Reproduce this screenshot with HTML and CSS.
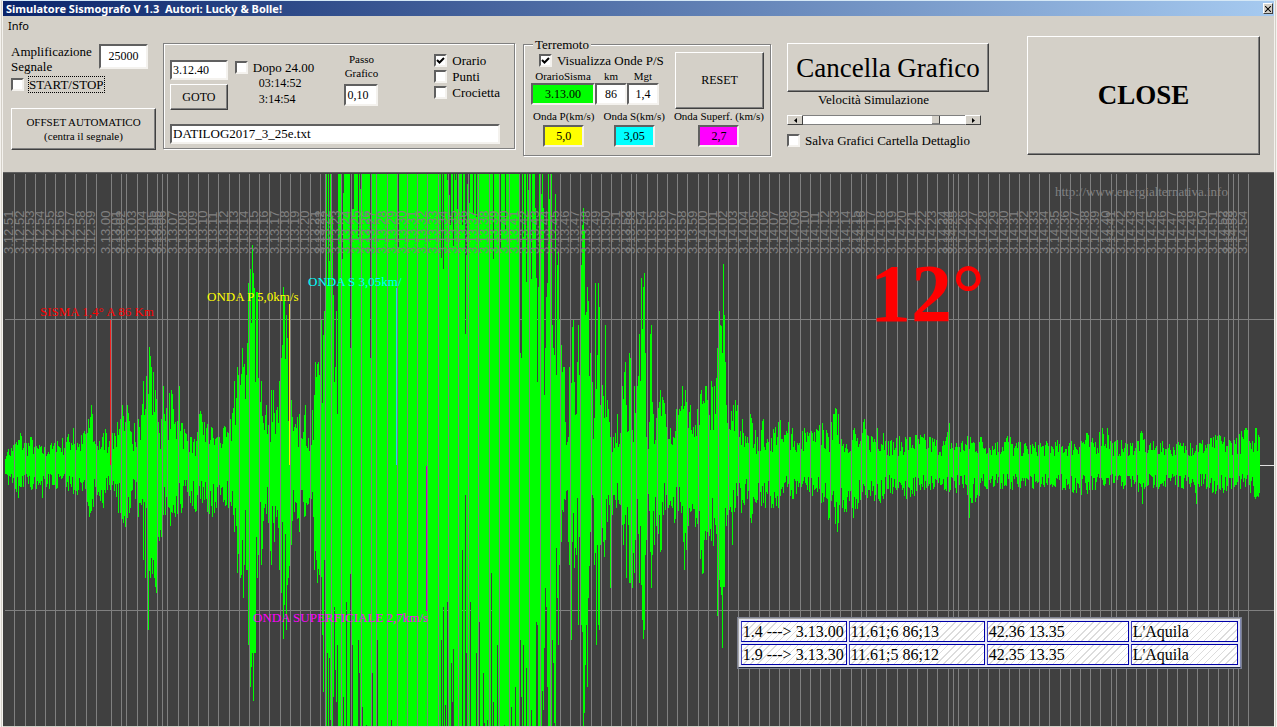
FILE: index.html
```html
<!DOCTYPE html>
<html lang="it">
<head>
<meta charset="utf-8">
<title>Simulatore Sismografo V 1.3</title>
<link rel="stylesheet" href="styles.css">
</head>
<body>
<div class="window">
  <header class="titlebar">
    <h1 class="title">Simulatore Sismografo V 1.3&nbsp; Autori: Lucky &amp; Bolle!</h1>
    <button class="title-close" type="button" aria-label="Chiudi finestra">
      <svg width="6" height="6" viewBox="0 0 7 7"><path d="M0 0L7 7M7 0L0 7" stroke="#000" stroke-width="1.2"/></svg>
    </button>
  </header>
  <nav class="menubar"><button class="menu-item" type="button">Info</button></nav>

  <main class="toolbar">
    <section class="signal">
      <div class="amp-row">
        <label class="label" for="amp">Amplificazione<br>Segnale</label>
        <input class="field field-amp" id="amp" value="25000">
      </div>
      <label class="check check-start"><input type="checkbox"><span class="focus">START/STOP</span></label>
      <button class="btn btn-offset" type="button">OFFSET AUTOMATICO<br>(centra il segnale)</button>
    </section>

    <section class="group group-file">
      <div class="file-top">
        <div class="goto-col">
          <input class="field" aria-label="Orario di partenza" value="3.12.40">
          <button class="btn btn-goto" type="button">GOTO</button>
        </div>
        <div class="after-col">
          <label class="check"><input type="checkbox"><span>Dopo 24.00</span></label>
          <span class="clock">03:14:52</span>
          <span class="clock">3:14:54</span>
        </div>
        <div class="step-col">
          <label class="small" for="step">Passo<br>Grafico</label>
          <input class="field field-step" id="step" value="0,10">
        </div>
        <div class="options">
          <label class="check"><input type="checkbox" checked><span>Orario</span></label>
          <label class="check"><input type="checkbox"><span>Punti</span></label>
          <label class="check"><input type="checkbox"><span>Crocietta</span></label>
        </div>
      </div>
      <input class="field field-file" aria-label="File dati" value="DATILOG2017_3_25e.txt">
    </section>

    <fieldset class="group group-quake">
      <legend>Terremoto</legend>
      <div class="quake-top">
        <div class="quake-left">
          <label class="check check-waves"><input type="checkbox" checked><span>Visualizza Onde P/S</span></label>
          <div class="event">
            <label class="small" for="time">OrarioSisma</label>
            <label class="small" for="dist">km</label>
            <label class="small" for="mag">Mgt</label>
            <input class="field center green" id="time" value="3.13.00">
            <input class="field center" id="dist" value="86">
            <input class="field center" id="mag" value="1,4">
          </div>
        </div>
        <button class="btn btn-reset" type="button">RESET</button>
      </div>
      <div class="speeds">
        <div class="speed"><label class="small" for="vp">Onda P(km/s)</label><input class="field center yellow" id="vp" value="5,0"></div>
        <div class="speed"><label class="small" for="vs">Onda S(km/s)</label><input class="field center cyan" id="vs" value="3,05"></div>
        <div class="speed"><label class="small" for="vl">Onda Superf. (km/s)</label><input class="field center magenta" id="vl" value="2,7"></div>
      </div>
    </fieldset>

    <section class="graphics">
      <button class="btn btn-clear" type="button">Cancella Grafico</button>
      <label class="label speed-label" for="speed">Velocità Simulazione</label>
      <div class="scroll">
        <button class="arrow" type="button" aria-label="Rallenta"><svg width="3" height="5" viewBox="0 0 3 5"><path d="M3 0V5L0 2.5Z"/></svg></button>
        <input class="range" id="speed" type="range" min="0" max="100" value="84">
        <button class="arrow" type="button" aria-label="Accelera"><svg width="3" height="5" viewBox="0 0 3 5"><path d="M0 0V5L3 2.5Z"/></svg></button>
      </div>
      <label class="check"><input type="checkbox"><span>Salva Grafici Cartella Dettaglio</span></label>
    </section>

    <button class="btn btn-close" type="button">CLOSE</button>
  </main>

  <section class="chart">
    <svg class="plot" id="plot" viewBox="3 173 1271 553" role="img" aria-label="Sismogramma">
      <path class="grid" d="M5 319.5H1274M5 610.5H1274"/>
      <path class="zero" d="M5 465.5H1274"/>
      <path class="trace" id="trace"/>
      <path class="grid" id="seconds"/>
      <g class="times" id="times"></g>
      <path class="mark red-line" d="M110.5 320V465"/>
      <path class="mark yellow-line" d="M289.5 304V465"/>
      <path class="mark cyan-line" d="M396.5 288V465"/>
      <path class="mark magenta-line" d="M426.5 466V611"/>
      <text class="note red" x="40" y="316">SISMA 1,4° A 86 Km</text>
      <text class="note yellow-text" x="207" y="301">ONDA P 5,0km/s</text>
      <text class="note cyan-text" x="308" y="286">ONDA S 3,05km/</text>
      <text class="note magenta-text" x="253" y="622">ONDA SUPERFICIALE 2,7km/s</text>
      <text class="note site" x="1055" y="196">http://www.energialternativa.info</text>
      <text class="degree" x="870" y="321">12°</text>
    </svg>
    <table class="events">
      <tr><td>1.4 ---&gt; 3.13.00</td><td>11.61;6 86;13</td><td>42.36 13.35</td><td>L'Aquila</td></tr>
      <tr><td>1.9 ---&gt; 3.13.30</td><td>11.61;5 86;12</td><td>42.35 13.35</td><td>L'Aquila</td></tr>
    </table>
  </section>
</div>
<script src="chart.js"></script>
</body>
</html>
```
FILE: styles.css
```css
* { box-sizing: border-box; }

body {
  margin: 0;
  background: #d4d0c8;
  color: #000;
  font: 13px/15px "Liberation Serif", "Times New Roman", serif;
}

button, input { font: inherit; color: inherit; margin: 0; }

.window {
  border-top: 1px solid #d5e8f6;
  border-left: 3px double #f4f2ee;
  border-right: 3px double #f4f2ee;
}

/* title and menu */
.titlebar {
  display: flex;
  align-items: center;
  justify-content: space-between;
  height: 15px;
  padding: 0 1px 0 3px;
  background: linear-gradient(90deg, #0a246a, #a6caf0);
}
.title {
  margin: 0;
  color: #fff;
  font: bold 11px/15px "Noto Sans", "Open Sans", sans-serif;
  white-space: nowrap;
}
.title-close {
  display: grid;
  place-items: center;
  width: 10px;
  height: 11px;
  padding: 0;
  background: #d4d0c8;
  border: 1px solid;
  border-color: #fff #404040 #404040 #fff;
}
.menubar { height: 20px; padding: 2px 5px; }
.menu-item {
  padding: 0;
  border: 0;
  background: none;
  font: 11px/15px "Noto Sans", "Open Sans", sans-serif;
}

/* shared controls */
.btn {
  padding: 0;
  background: #d4d0c8;
  border: 1px solid;
  border-color: #fff #404040 #404040 #fff;
  box-shadow: inset -1px -1px 0 #808080;
  text-align: center;
}
.field {
  min-width: 0;
  height: 20px;
  padding: 0 1px;
  background: #fff;
  border: 2px solid;
  border-color: #606060 #f4f2ee #f4f2ee #606060;
  border-radius: 0;
  font-size: 12px;
}
.center { text-align: center; }
.green { background: #0f0; }
.yellow { background: #ff0; }
.cyan { background: #0ff; }
.magenta { background: #f0f; }
.small { font-size: 11px; line-height: 14px; text-align: center; white-space: nowrap; }
.check { display: flex; align-items: center; gap: 5px; height: 16px; white-space: nowrap; }
.check input {
  appearance: none;
  flex: none;
  width: 13px;
  height: 13px;
  background: #fff;
  border: 2px solid;
  border-color: #606060 #f4f2ee #f4f2ee #606060;
}
.check input:checked {
  background: #fff url("data:image/svg+xml,%3Csvg xmlns='http://www.w3.org/2000/svg' viewBox='0 0 9 9'%3E%3Cpath d='M1 4L3.5 6.5L8 2' fill='none' stroke='%23000' stroke-width='2'/%3E%3C/svg%3E") center / 9px 9px no-repeat;
}
.group {
  margin: 0;
  border: 1px solid #808080;
  box-shadow: 1px 1px 0 #fff, inset 1px 1px 0 #fff;
}

/* toolbar */
.toolbar {
  display: flex;
  align-items: flex-start;
  min-height: 136px;
  padding: 0 14px 0 8px;
}
.signal { flex: none; width: 145px; padding-top: 8px; }
.amp-row { display: flex; justify-content: space-between; padding-right: 8px; }
.amp-row .field { width: 49px; height: 25px; text-align: center; }
.check-start { margin: 7px 0 16px; height: 16px; }
.check-start .focus { outline: 1px dotted #000; }
.amp-row { height: 25px; }
.btn-offset { width: 100%; height: 42px; font-size: 11px; line-height: 14px; }

.group-file {
  flex: none;
  display: flex;
  flex-direction: column;
  justify-content: space-between;
  width: 352px;
  height: 106px;
  margin: 7px 0 0 7px;
  padding: 8px 14px 4px 6px;
}
.file-top { display: flex; gap: 7px; }
.goto-col { display: grid; gap: 4px; width: 58px; padding-top: 8px; align-content: start; }
.goto-col .field { width: 100%; }
.btn-goto { height: 26px; font-size: 12px; }
.after-col { display: flex; flex-direction: column; width: 91px; padding-top: 7px; }
.clock { padding-left: 24px; font-size: 12px; line-height: 16px; }
.step-col { display: flex; flex-direction: column; align-items: center; gap: 4px; width: 58px; }
.field-step { width: 34px; height: 22px; }
.options { padding-left: 37px; }
.field-file { width: 100%; font-size: 13px; }

.group-quake {
  flex: none;
  width: 248px;
  margin: 1px 0 0 8px;
  padding: 0 6px 8px 7px;
}
.group-quake legend { margin-left: 2px; padding: 0 2px; background: #d4d0c8; }
.quake-top { display: flex; justify-content: space-between; }
.check-waves { padding-left: 8px; }
.event { display: grid; grid-template-columns: 64px 32px 32px; padding-top: 1px; }
.event .field { height: 22px; }
.btn-reset { width: 89px; height: 57px; font-size: 12px; }
.speeds { display: flex; justify-content: space-between; padding-left: 2px; }
.speed { display: grid; justify-items: center; gap: 2px; }
.speed .field { width: 41px; height: 22px; }

.graphics { flex: none; width: 202px; margin: 7px 0 0 16px; }
.btn-clear { width: 100%; height: 49px; font-size: 27px; line-height: 32px; white-space: nowrap; }
.speed-label { display: block; width: 173px; text-align: center; }
.scroll { display: flex; width: 194px; height: 10px; margin: 8px 0 7px; }
.arrow {
  display: grid;
  place-items: center;
  width: 16px;
  padding: 0;
  background: #d4d0c8;
  border: 1px solid;
  border-color: #fff #404040 #404040 #fff;
}
.range {
  appearance: none;
  flex: 1;
  min-width: 0;
  height: 10px;
  background: #fff;
  border-top: 1px solid #808080;
  border-bottom: 1px solid #808080;
}
.range::-webkit-slider-thumb {
  appearance: none;
  width: 8px;
  height: 8px;
  background: #d4d0c8;
  border-right: 1px solid #404040;
  border-bottom: 1px solid #808080;
}

.btn-close {
  flex: 1;
  height: 119px;
  margin-left: 38px;
  font-size: 27px;
  font-weight: bold;
}

/* seismogram */
.chart { position: relative; border-top: 1px solid #606060; border-bottom: 1px solid #d4d0c8; }
.plot { display: block; width: 100%; height: auto; overflow: visible; background: #404040; }
.grid { fill: none; stroke: #808080; shape-rendering: crispEdges; }
.zero { stroke: #e0e0e0; shape-rendering: crispEdges; }
.trace { stroke: #0f0; fill: none; shape-rendering: crispEdges; }
.times { fill: #808080; font: 13px "Liberation Sans", Arial, sans-serif; }
.mark { fill: none; shape-rendering: crispEdges; }
.red-line { stroke: #f02020; }
.yellow-line { stroke: #f0f000; }
.cyan-line { stroke: #20d8f8; }
.magenta-line { stroke: #c000c0; }
.note { font-size: 13px; }
.red { fill: #f00; }
.yellow-text { fill: #ff0; }
.cyan-text { fill: #0ff; }
.magenta-text { fill: #f0f; }
.site { fill: #808080; }
.degree { fill: #f00; font-size: 82px; font-weight: bold; }

.events {
  position: absolute;
  left: 57.8%;
  top: 80.4%;
  width: 39.6%;
  table-layout: fixed;
  border-spacing: 2px;
  border: 1px solid;
  border-color: #a8a8a8 #8088b0 #202840 #a8a8a8;
  background: #e6e8f6;
  box-shadow: 0 0 0 1px #7c8090;
  font-size: 16px;
  line-height: 19px;
}
.events td {
  padding: 0 1px;
  border: 1px solid #0000a8;
  border-left-color: #4040c0;
  background: repeating-linear-gradient(135deg, #fff 0 4px, #dcdcdc 4px 5px);
  white-space: nowrap;
}
.events td:nth-child(1) { width: 106px; }
.events td:nth-child(2) { width: 136px; }
.events td:nth-child(3) { width: 142px; }
```
FILE: chart.js
```javascript
const ZERO = 465;
const FULL_UP = 291;
const FULL_DOWN = 261;

// One entry per second tick: x position of the tick; REPEATED ticks show the previous second again.
const ticks = [14,25,35,45,55,65,75,86,96,111,121,126,137,147,157,162,167,178,188,198,208,218,229,239,249,259,269,280,290,300,310,
  320,325,331,341,351,361,371,376,387,397,407,417,427,438,448,458,468,478,489,499,509,519,529,540,550,560,570,580,591,601,611,621,
  631,636,647,657,667,677,687,698,708,718,728,738,749,759,769,779,789,800,810,820,830,840,851,861,866,876,886,897,907,917,927,937,
  948,953,958,968,978,988,999,1009,1019,1029,1039,1049,1060,1070,1080,1090,1100,1111,1116,1126,1136,1146,1157,1167,1177,1187,1197,
  1208,1218,1228,1233,1238,1248];
const repeated = new Set([162, 331, 953, 1233]);

// Amplitude peaks as x:amplitude pairs, above and below the zero line.
const up = parse(`5:6 8:16 13:20 20:32 26:22 30:28 40:18 50:20 57:24 67:28 73:37 77:22 84:34 88:46 91:60 94:24 99:24 105:36 109:24 114:32 117:43 120:46
 122:60 124:34 127:60 130:34 134:42 138:46 141:50 143:84 145:56 147:150 149:118 151:98 153:93 155:75 158:43 161:46 163:79 165:44 167:65 171:75
 173:56 177:44 179:79 182:42 190:28 196:24 199:51 204:43 212:37 217:28 223:37 228:32 230:46 232:52 234:84 237:98 239:136 240:80 242:117 243:98
 246:90 247:122 248:182 250:196 252:220 253:192 254:177 256:173 257:173 258:87 261:84 263:42 266:60 268:40 271:75 273:75 276:55 279:84 281:107
 283:178 284:167 286:150 287:127 289:90 291:65 293:34 299:51 302:26 305:60 308:27 312:55 315:103 316:88 318:103 319:90 321:145 323:130 324:154 325:154
 554:110 555:271 556:90 557:200 558:214 559:145 561:120 563:98 564:98 565:43 568:28 569:98 571:82 572:138 573:145 574:83 575:50 577:103 578:140
 580:70 581:200 582:240 583:257 584:235 585:150 587:178 588:164 590:112 592:83 594:47 595:182 597:110 598:182 599:158 600:60 602:80 604:47 605:140
 607:65 609:43 611:33 613:28 617:51 620:32 622:79 624:93 625:103 626:60 628:34 629:112 631:83 632:35 634:79 637:79 638:89 639:131 640:84 641:187
 642:136 643:178 644:192 645:112 647:47 649:43 650:131 651:140 653:51 656:47 660:75 663:65 665:51 667:28 670:37 673:28 676:56 679:56 682:79 683:56
 685:75 688:37 690:60 694:28 697:56 701:75 703:64 706:79 709:50 711:84 714:79 715:51 717:117 719:154 720:140 721:139 722:112 723:201 724:150 725:103
 727:42 735:65 737:60 740:34 742:46 746:22 750:51 752:42 757:28 763:46 766:22 779:51 782:26 788:43 792:37 797:22 804:37 812:32 822:42 828:28 831:43
 836:56 838:51 841:26 854:37 860:24 864:46 867:30 877:37 883:32 888:24 905:28 917:30 930:28 945:24 949:42 951:22 970:28 980:28 995:22 1009:32 1012:21
 1040:22 1070:24 1087:32 1090:22 1102:37 1107:37 1110:24 1130:22 1142:32 1150:22 1190:22 1213:28 1236:27 1246:37 1250:22 1255:37 1256:37 1258:30 1259:28`);
const down = parse(`5:9 8:20 12:18 18:33 23:22 30:22 42:33 46:22 57:23 66:22 75:30 82:26 89:52 93:42 97:30 103:43 110:25 118:48 125:62 130:43 135:34 138:52
 141:40 143:95 145:113 147:113 148:165 149:106 150:113 153:95 154:113 156:128 158:72 161:72 165:50 170:61 175:52 182:43 190:38 195:47 202:38 212:52 216:43
 220:30 228:43 234:67 237:108 240:113 241:110 243:133 244:100 246:105 247:105 248:180 249:180 250:222 251:202 252:188 253:236 254:188 255:188 257:113 258:90
 261:100 264:43 268:58 271:100 274:77 277:45 279:105 281:128 283:174 284:140 286:165 287:120 288:113 291:80 294:47 299:67 304:52 310:30 313:52 314:105
 316:95 317:118 319:110 320:90 321:112 322:170 323:227 324:95 325:220 556:83 557:133 558:180 559:100 561:77 563:47 565:35 567:25 568:77 569:100 571:175
 572:77 573:48 574:103 575:83 576:90 577:33 578:160 580:140 581:160 582:167 583:261 584:248 585:200 586:160 587:222 588:133 590:67 592:30 594:100 596:180
 597:80 598:160 599:165 600:80 602:63 604:92 605:75 607:57 609:40 610:123 611:70 613:30 616:43 620:40 623:80 626:113 629:118 630:118 634:108 636:75 639:118
 641:120 642:155 643:174 644:165 645:90 647:50 651:123 652:90 656:61 661:85 663:50 669:40 677:67 681:48 684:105 686:85 689:43 695:62 698:60 700:94 703:108
 704:75 706:75 709:71 713:81 715:60 717:151 718:95 720:122 721:130 722:183 723:122 724:122 726:61 729:45 732:80 735:43 741:48 747:34 751:58 754:34 771:43
 778:43 783:28 792:34 800:26 810:28 821:38 829:53 837:67 839:40 853:53 858:38 866:30 880:38 890:28 907:33 920:25 945:24 967:30 969:53 972:38 976:33 985:22
 1010:24 1050:20 1087:29 1100:24 1136:22 1142:39 1146:22 1190:22 1196:39 1199:22 1215:29 1235:20 1250:28 1255:34 1258:32 1259:28`);

// Narrow gaps inside the saturated part of the recording.
const upGaps = parse(`327:180 329:204 331:170 332:248 333:170 334:83 335:98 336:154 337:51 342:206 343:272 350:117 352:256 353:256 358:228 360:276 370:107
 398:218 441:207 443:196 447:285 449:270 450:240 453:219 455:285 457:256 462:240 465:131 466:210 467:281 469:262 473:250 476:248 493:206 500:217 505:235
 520:112 521:107 523:228 526:183 528:275 531:186 535:257 536:187 537:83 538:178 541:271 543:257 544:70 545:117 546:168 547:182 549:266 552:140 553:117`);
const downGaps = parse(`327:188 329:193 330:255 333:232 334:142 335:205 336:237 337:180 343:232 346:137 350:109 352:180 358:175 359:208 362:242 366:260
 372:208 377:175 391:255 441:175 443:142 445:240 447:137 451:198 452:237 453:184 462:85 465:30 466:188 470:137 476:188 479:157 483:208 484:258 487:255
 491:108 493:237 497:180 504:260 511:242 515:222 520:175 521:232 523:180 526:203 531:245 536:157 537:160 542:226 543:245 544:183 545:123 546:142 547:222
 552:175 553:198 554:258`);

function parse(text) {
  return new Map(text.trim().split(/\s+/).map(pair => pair.split(":").map(Number)));
}

let seed = 7;
function noise() {
  seed = (seed * 16807) % 2147483647;
  return seed / 2147483647;
}

function amplitudes(peaks, gaps, full) {
  const xs = [...peaks.keys()];
  const out = new Map();
  let i = 0;
  for (let x = 5; x <= 1259; x++) {
    while (i < xs.length - 2 && xs[i + 1] <= x) i++;
    if (x > 325 && x < 556 && !peaks.has(x)) {
      out.set(x, gaps.has(x) ? gaps.get(x) : full);
    } else if (peaks.has(x)) {
      out.set(x, peaks.get(x));
    } else {
      const t = (x - xs[i]) / (xs[i + 1] - xs[i]);
      const level = peaks.get(xs[i]) * (1 - t) + peaks.get(xs[i + 1]) * t;
      out.set(x, Math.max(9, level * (0.35 + 0.75 * noise())));
    }
  }
  return out;
}

const above = amplitudes(up, upGaps, FULL_UP);
const below = amplitudes(down, downGaps, FULL_DOWN);
let d = "";
for (const [x, a] of above) {
  d += `M${x + 0.5} ${Math.round(ZERO - a)}V${Math.round(ZERO + below.get(x))}`;
}
document.getElementById("trace").setAttribute("d", d);
document.getElementById("seconds").setAttribute("d", ticks.map(x => `M${x + 0.5} 174V726`).join(""));

const times = document.getElementById("times");
let second = 12 * 60 + 50;
for (const x of ticks) {
  if (!repeated.has(x)) second++;
  const label = document.createElementNS("http://www.w3.org/2000/svg", "text");
  label.setAttribute("transform", `translate(${x - 1} 254) rotate(-90)`);
  label.textContent = `3.${Math.floor(second / 60)}.${String(second % 60).padStart(2, "0")}`;
  times.append(label);
}
```
